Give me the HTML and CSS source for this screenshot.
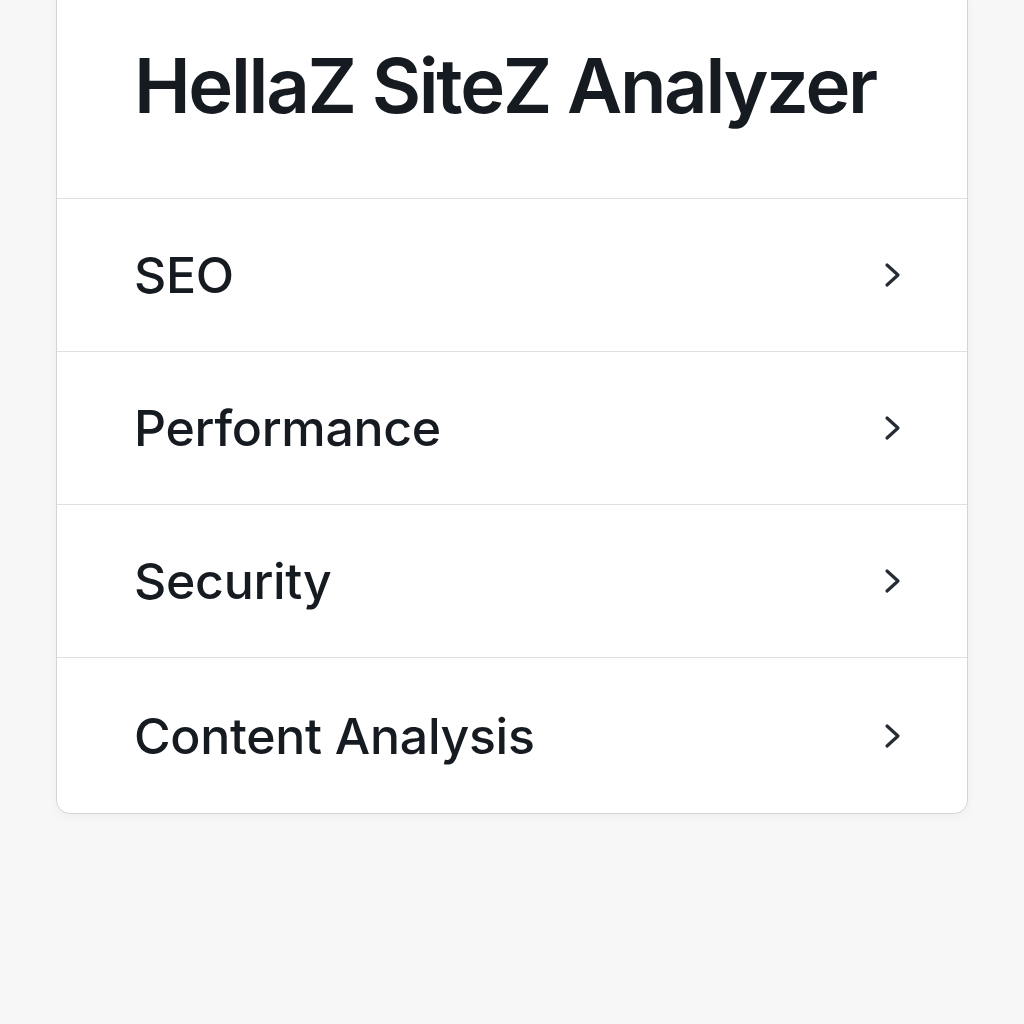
FILE: index.html
```html
<!DOCTYPE html>
<html lang="en">
<head>
<meta charset="utf-8">
<title>HellaZ SiteZ Analyzer</title>
<link rel="stylesheet" href="styles.css">
</head>
<body>
<div class="page">
  <section class="card">
    <header class="card-header">
      <h1 class="title">HellaZ SiteZ Analyzer</h1>
    </header>
    <ul class="menu">
      <li class="menu-item"><span class="label">SEO</span><svg class="chev" viewBox="0 0 20 26" width="20" height="26"><path d="M4 3 L15 13 L4 23" fill="none" stroke="#262c34" stroke-width="3.2" stroke-linecap="round" stroke-linejoin="round"/></svg></li>
      <li class="menu-item"><span class="label">Performance</span><svg class="chev" viewBox="0 0 20 26" width="20" height="26"><path d="M4 3 L15 13 L4 23" fill="none" stroke="#262c34" stroke-width="3.2" stroke-linecap="round" stroke-linejoin="round"/></svg></li>
      <li class="menu-item"><span class="label">Security</span><svg class="chev" viewBox="0 0 20 26" width="20" height="26"><path d="M4 3 L15 13 L4 23" fill="none" stroke="#262c34" stroke-width="3.2" stroke-linecap="round" stroke-linejoin="round"/></svg></li>
      <li class="menu-item"><span class="label">Content Analysis</span><svg class="chev" viewBox="0 0 20 26" width="20" height="26"><path d="M4 3 L15 13 L4 23" fill="none" stroke="#262c34" stroke-width="3.2" stroke-linecap="round" stroke-linejoin="round"/></svg></li>
    </ul>
  </section>
</div>
</body>
</html>
```
FILE: styles.css
```css
html, body {
  margin: 0;
  padding: 0;
  background: #f7f7f7;
}
body {
  font-family: Inter, "Noto Sans", "Liberation Sans", sans-serif;
  color: #161b21;
}
.page {
  width: 1024px;
  height: 1024px;
  overflow: hidden;
}
.card {
  margin: -14px 0 0 56px;
  width: 910px;
  background: #fff;
  border: 1px solid #d2d5da;
  border-radius: 14px;
  box-shadow: 0 3px 8px rgba(0,0,0,0.04);
}
.card-header {
  height: 212px;
  box-sizing: border-box;
  border-bottom: 1px solid #dde0e5;
  display: flex;
  align-items: center;
  padding: 0 0 16px 77px;
}
.title {
  margin: 0;
  font-size: 76px;
  font-weight: 600;
  letter-spacing: -2.3px;
}
.menu {
  list-style: none;
  margin: 0;
  padding: 0;
}
.menu-item {
  display: flex;
  align-items: center;
  justify-content: space-between;
  height: 153px;
  box-sizing: border-box;
  padding: 0 64px 0 77px;
  border-bottom: 1px solid #dde0e5;
}
.menu-item:last-child {
  border-bottom: none;
  height: 155px;
}
.label {
  font-size: 50px;
  font-weight: 500;
  letter-spacing: -0.3px;
}
.chev {
  display: block;
}
```
